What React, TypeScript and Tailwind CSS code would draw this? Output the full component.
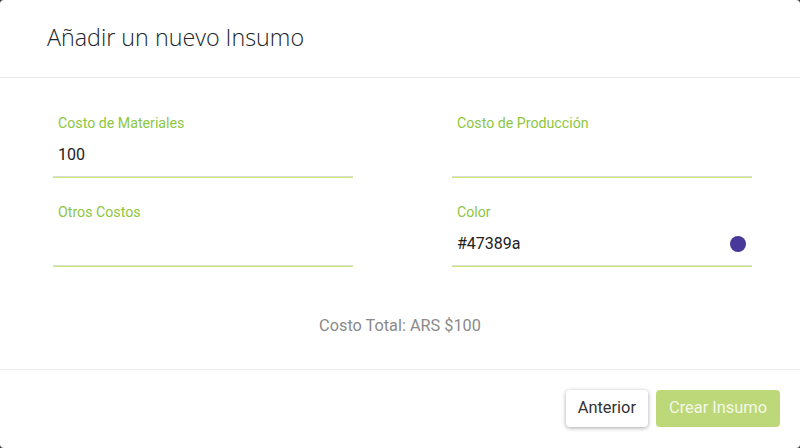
import { useState } from 'react';

type Field = { label: string; value: string; swatch?: string };

const fields: Field[] = [
  { label: 'Costo de Materiales', value: '100' },
  { label: 'Costo de Producción', value: '' },
  { label: 'Otros Costos', value: '' },
  { label: 'Color', value: '#47389a', swatch: '#47389a' },
];

function TextField({ field }: { field: Field }) {
  const [value, setValue] = useState(field.value);
  return (
    <div className="flex flex-col">
      <label className="pl-[5px] text-[14.2px] leading-5 text-[#8dc63f]">{field.label}</label>
      <div className="mt-[10px] flex items-center border-b border-[#dcdcdc] pb-[9px] pl-[5px] pr-[6px] shadow-[0_1px_0_#c9ea6e]">
        <input
          value={value}
          onChange={(e) => setValue(e.target.value)}
          className="h-6 flex-1 bg-transparent text-[16px] leading-6 text-[#212121] outline-none"
        />
        {field.swatch && (
          <span className="h-4 w-4 rounded-full bg-[#47389a]" />
        )}
      </div>
    </div>
  );
}

export default function App() {
  return (
    <div className="h-[448px] w-[800px] bg-[#3a3a3a]" style={{ fontFamily: 'Roboto, sans-serif' }}>
      <div className="flex h-full flex-col rounded-[4px] bg-white">
        {/* Header */}
        <div className="flex h-[78px] items-center border-b border-[#e9ecef] pl-[47px] pb-[2px]">
          <h1 className="text-[23.3px] font-[350] text-[#212529]" style={{ fontFamily: '"Open Sans", sans-serif' }}>
            Añadir un nuevo Insumo
          </h1>
        </div>

        {/* Body */}
        <div className="flex flex-1 flex-col pt-[35px]">
          <div className="grid grid-cols-[300px_300px] gap-x-[99px] gap-y-[25px] pl-[53px]">
            {fields.map((f) => (
              <TextField key={f.label} field={f} />
            ))}
          </div>
          <p className="mt-[48px] text-center text-[16.3px] leading-6 text-[#8a8a8a]">Costo Total: ARS $100</p>
        </div>

        {/* Footer */}
        <div className="flex h-[79px] items-start justify-end gap-2 border-t border-[#e9ecef] pr-5 pt-5">
          <button className="h-[37px] rounded-[4px] bg-white px-[12px] text-[16.4px] text-[#333] shadow-[0_1px_4px_rgba(0,0,0,0.35)]">
            Anterior
          </button>
          <button className="h-[37px] rounded-[4px] bg-[#bcd878] px-[13px] text-[16.4px] text-[#f4f9e8]">
            Crear Insumo
          </button>
        </div>
      </div>
    </div>
  );
}
